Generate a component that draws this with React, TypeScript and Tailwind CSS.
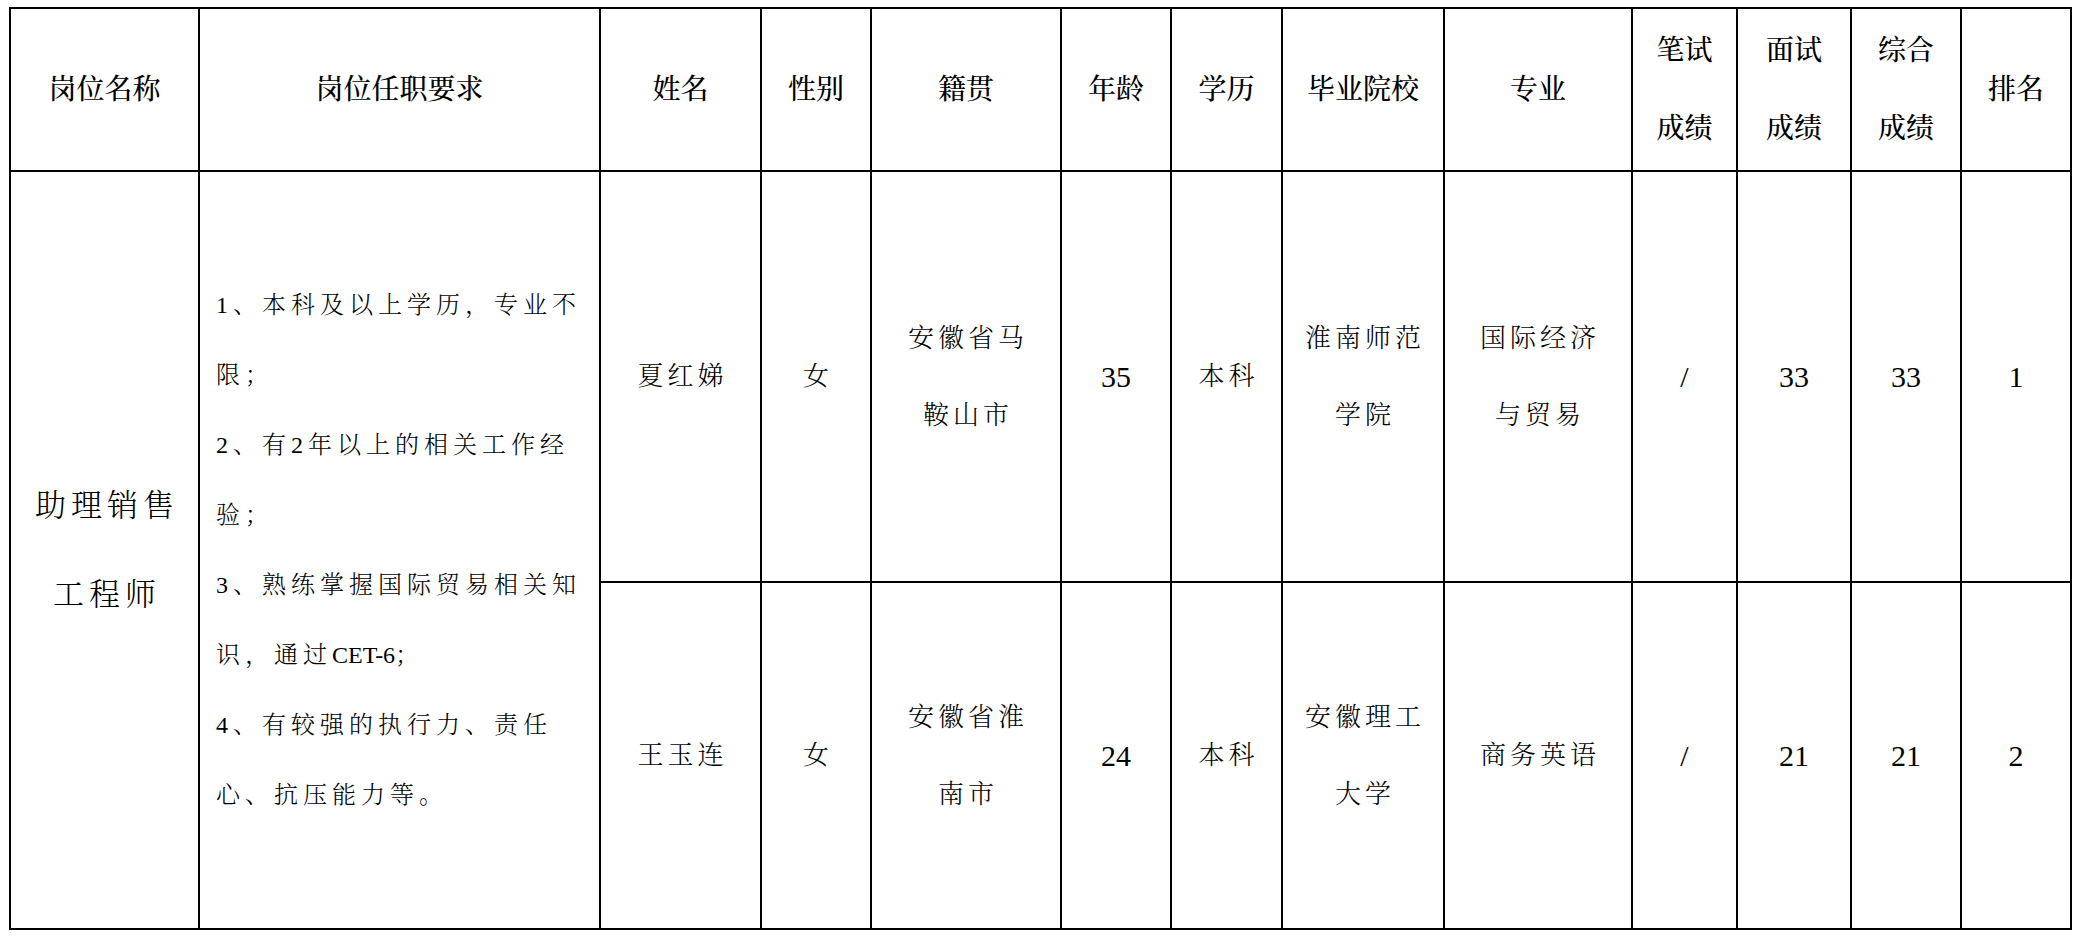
import React from "react"

const FONT = '"Liberation Serif", "Noto Serif CJK SC", "Noto Sans CJK SC", serif'

type Row = {
  name: string
  gender: string
  origin: string[]
  age: string
  degree: string
  school: string[]
  major: string[]
  written: string
  interview: string
  total: string
  rank: string
}

const ROWS: Row[] = [
  {
    name: "夏红娣",
    gender: "女",
    origin: ["安徽省马", "鞍山市"],
    age: "35",
    degree: "本科",
    school: ["淮南师范", "学院"],
    major: ["国际经济", "与贸易"],
    written: "/",
    interview: "33",
    total: "33",
    rank: "1",
  },
  {
    name: "王玉连",
    gender: "女",
    origin: ["安徽省淮", "南市"],
    age: "24",
    degree: "本科",
    school: ["安徽理工", "大学"],
    major: ["商务英语"],
    written: "/",
    interview: "21",
    total: "21",
    rank: "2",
  },
]

const REQUIREMENTS: React.ReactNode[] = [
  "1、本科及以上学历，专业不",
  "限；",
  "2、有2年以上的相关工作经",
  "验；",
  "3、熟练掌握国际贸易相关知",
  <>
    识，通过<span className="tracking-normal">CET-6</span>；
  </>,
  "4、有较强的执行力、责任",
  "心、抗压能力等。",
]

function HeadCell({ lines }: { lines: string[] }) {
  return (
    <div className="bg-white flex items-center justify-center">
      <div className="flex flex-col items-center text-[28px] leading-[78px] font-medium text-black">
        {lines.map((l) => (
          <span key={l}>{l}</span>
        ))}
      </div>
    </div>
  )
}

function DataCell({ lines, num }: { lines: string[]; num?: boolean }) {
  return (
    <div className="bg-white flex items-center justify-center">
      <div
        className={
          num
            ? "flex flex-col items-center text-[30px] leading-[77px] font-light text-black"
            : "flex flex-col items-center text-[26px] leading-[77px] tracking-[4px] pl-[4px] font-light text-black"
        }
      >
        {lines.map((l) => (
          <span key={l}>{l}</span>
        ))}
      </div>
    </div>
  )
}

export default function App() {
  return (
    <div className="min-h-screen bg-white pt-[7px] pl-[9px]" style={{ fontFamily: FONT }}>
      <div className="grid w-fit bg-black p-[2px] gap-[2px] grid-cols-[187px_399px_159px_108px_188px_108px_109px_160px_186px_103px_112px_108px_108px] grid-rows-[161px_409px_345px]">
        <HeadCell lines={["岗位名称"]} />
        <HeadCell lines={["岗位任职要求"]} />
        <HeadCell lines={["姓名"]} />
        <HeadCell lines={["性别"]} />
        <HeadCell lines={["籍贯"]} />
        <HeadCell lines={["年龄"]} />
        <HeadCell lines={["学历"]} />
        <HeadCell lines={["毕业院校"]} />
        <HeadCell lines={["专业"]} />
        <HeadCell lines={["笔试", "成绩"]} />
        <HeadCell lines={["面试", "成绩"]} />
        <HeadCell lines={["综合", "成绩"]} />
        <HeadCell lines={["排名"]} />

        <div className="row-span-2 bg-white flex items-center justify-center">
          <div className="flex flex-col items-center text-[31px] leading-[89px] tracking-[5px] pl-[5px] font-light text-black">
            <span>助理销售</span>
            <span>工程师</span>
          </div>
        </div>
        <div className="row-span-2 bg-white flex items-center">
          <div className="flex flex-col pl-[16px] text-[24px] leading-[70px] tracking-[5px] font-light text-black">
            {REQUIREMENTS.map((l, i) => (
              <span key={i} className="whitespace-nowrap">
                {l}
              </span>
            ))}
          </div>
        </div>

        {ROWS.map((r) => (
          <React.Fragment key={r.name}>
            <DataCell lines={[r.name]} />
            <DataCell lines={[r.gender]} />
            <DataCell lines={r.origin} />
            <DataCell lines={[r.age]} num />
            <DataCell lines={[r.degree]} />
            <DataCell lines={r.school} />
            <DataCell lines={r.major} />
            <DataCell lines={[r.written]} num />
            <DataCell lines={[r.interview]} num />
            <DataCell lines={[r.total]} num />
            <DataCell lines={[r.rank]} num />
          </React.Fragment>
        ))}
      </div>
    </div>
  )
}
